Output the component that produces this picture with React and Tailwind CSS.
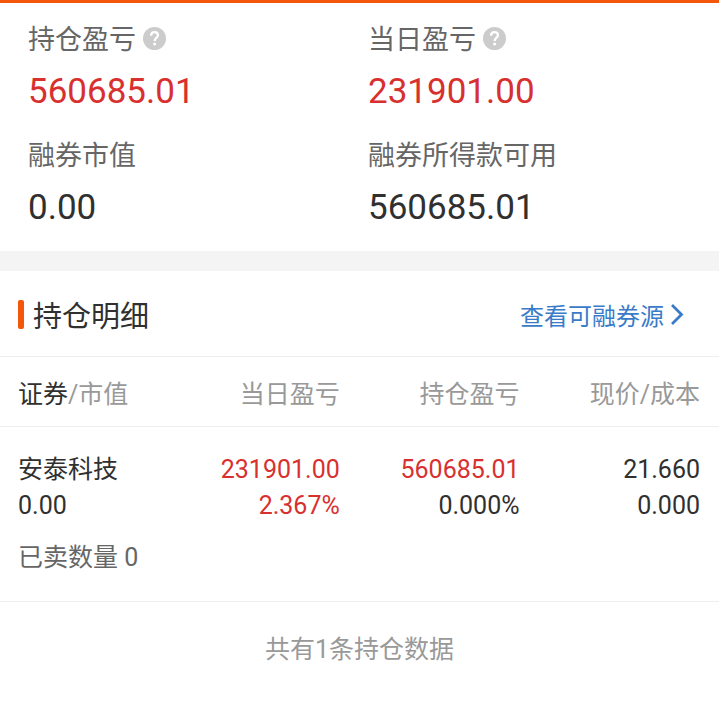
const summary = [
  { label: "持仓盈亏", value: "560685.01", help: true, color: "text-[#d8302f]" },
  { label: "当日盈亏", value: "231901.00", help: true, color: "text-[#d8302f]" },
  { label: "融券市值", value: "0.00", color: "text-[#303030]" },
  { label: "融券所得款可用", value: "560685.01", color: "text-[#303030]" },
];

const positions = [
  {
    name: "安泰科技",
    marketValue: "0.00",
    dayProfit: "231901.00",
    dayRate: "2.367%",
    profit: "560685.01",
    profitRate: "0.000%",
    price: "21.660",
    cost: "0.000",
    sold: 0,
  },
];

function HelpIcon() {
  return (
    <svg viewBox="0 0 24 24" className="size-[23px]" aria-hidden="true">
      <circle cx="12" cy="12" r="12" fill="#cccccc" />
      <path d="M8.4 9C8.4 6.6 9.8 5.3 12 5.3s3.6 1.3 3.6 3.4c0 2.6-3.5 2.9-3.5 5.8" fill="none" stroke="#fff" strokeWidth="2.4" />
      <circle cx="12.1" cy="17.7" r="1.6" fill="#fff" />
    </svg>
  );
}

function SummaryItem({ label, value, help, color }) {
  return (
    <div>
      <dt className="flex h-9 items-center gap-[7px] font-['Noto_Sans_CJK_SC',sans-serif] text-[27px] text-[#666666]">
        {label}
        {help && (
          <button type="button" aria-label={label + "说明"}>
            <HelpIcon />
          </button>
        )}
      </dt>
      <dd className={`mt-4 text-[35px] leading-10 ${color}`}>{value}</dd>
    </div>
  );
}

export default function App() {
  return (
    <main className="min-h-screen border-t-3 border-[#f4570b] bg-white font-['Roboto','Noto_Sans_CJK_SC',sans-serif] text-[#303030]">
      <dl className="grid grid-cols-[340px_1fr] gap-y-6 px-7 pt-[17px] pb-[23px]">
        {summary.map((item) => (
          <SummaryItem key={item.label} {...item} />
        ))}
      </dl>

      <div className="h-5 bg-[#f4f4f4]" />

      <section>
        <header className="flex h-[86px] items-center justify-between border-b border-[#eeeeee] pt-0.5 pr-[35px] pl-[18px] font-['Noto_Sans_CJK_SC',sans-serif]">
          <div className="flex items-center gap-[9px]">
            <span className="h-[29px] w-1.5 rounded-xs bg-[#f4570b]" />
            <h2 className="text-[29px]">持仓明细</h2>
          </div>
          <a href="#source" className="flex items-center gap-1 text-2xl text-[#3a7bc8]">
            查看可融券源
            <svg viewBox="0 0 16 24" className="h-6 w-4" fill="none" stroke="currentColor" strokeWidth="2.8" aria-hidden="true">
              <path d="M4 2 13.5 11.5 4 21" />
            </svg>
          </a>
        </header>

        <table className="w-full table-fixed text-right text-[25px]">
          <thead>
            <tr className="h-[69px] border-b border-[#eeeeee] text-[#999999]">
              <th className="w-40 pt-1.5 pl-[18px] text-left font-normal">
                <span className="text-[#303030]">证券</span>/市值
              </th>
              <th className="w-1/4 pt-1.5 font-normal">当日盈亏</th>
              <th className="w-1/4 pt-1.5 font-normal">持仓盈亏</th>
              <th className="pt-1.5 pr-[19px] font-normal">现价/成本</th>
            </tr>
          </thead>
          <tbody>
            {positions.map((p) => (
              <tr key={p.name} className="leading-9">
                <td className="pt-[25px] pl-[18px] text-left">
                  <p>{p.name}</p>
                  <p>{p.marketValue}</p>
                </td>
                <td className="pt-[25px] text-[#d8302f]">
                  <p>{p.dayProfit}</p>
                  <p>{p.dayRate}</p>
                </td>
                <td className="pt-[25px]">
                  <p className="text-[#d8302f]">{p.profit}</p>
                  <p>{p.profitRate}</p>
                </td>
                <td className="pt-[25px] pr-[19px]">
                  <p>{p.price}</p>
                  <p>{p.cost}</p>
                </td>
              </tr>
            ))}
            {positions.map((p) => (
              <tr key={p.name + "-sold"} className="border-b border-[#eeeeee] text-left leading-9 text-[#666666]">
                <td colSpan={4} className="pt-4 pb-[25px] pl-[18px]">
                  已卖数量 {p.sold}
                </td>
              </tr>
            ))}
          </tbody>
        </table>

        <p className="py-7 text-center text-[25px] leading-10 text-[#999999]">
          共有{positions.length}条持仓数据
        </p>
      </section>
    </main>
  );
}
